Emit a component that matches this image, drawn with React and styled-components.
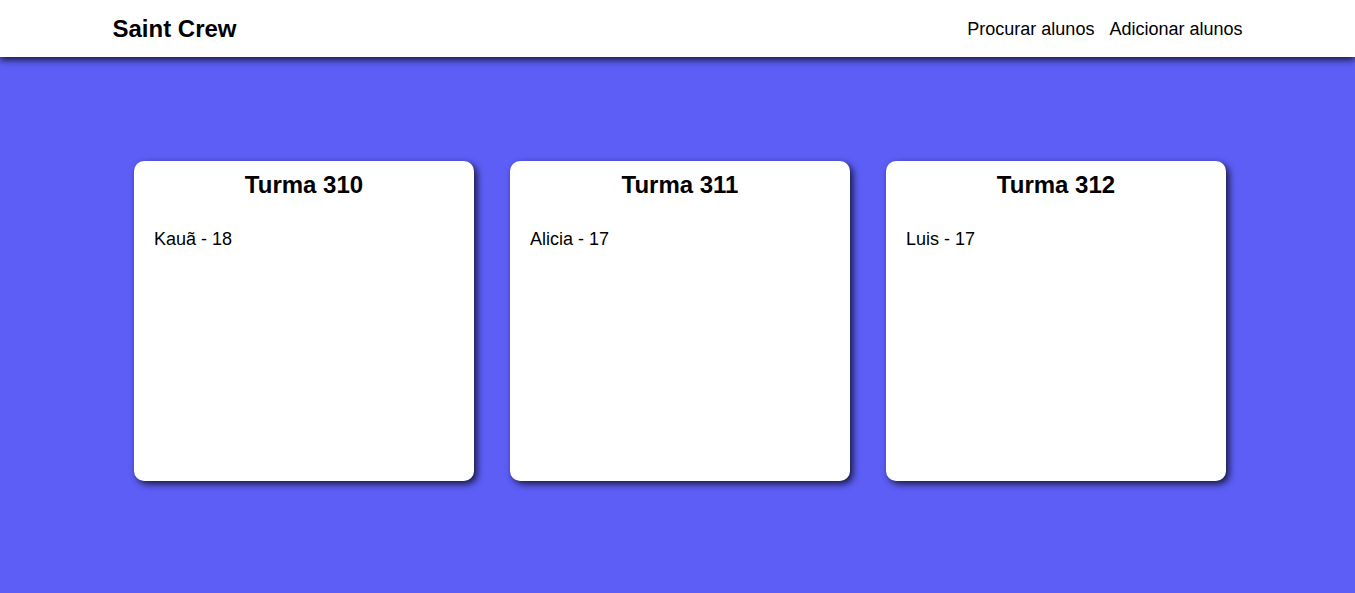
import React from "react";
import styled, { createGlobalStyle } from "styled-components";

const GlobalStyle = createGlobalStyle`
  * { box-sizing: border-box; }
  html, body {
    margin: 0;
    padding: 0;
    background-color: #5c5ef6;
    font-family: "Liberation Sans", Arial, sans-serif;
    color: #000000;
  }
`;

const turmas = [
  { nome: "Turma 310", alunos: [{ nome: "Kauã", idade: 18 }] },
  { nome: "Turma 311", alunos: [{ nome: "Alicia", idade: 17 }] },
  { nome: "Turma 312", alunos: [{ nome: "Luis", idade: 17 }] },
];

export default function App() {
  return (
    <>
      <GlobalStyle />
      <Page>
        <Header>
          <HeaderInner>
            <Logo>Saint Crew</Logo>
            <Nav>
              <NavLink>Procurar alunos</NavLink>
              <NavLink>Adicionar alunos</NavLink>
            </Nav>
          </HeaderInner>
        </Header>
        <Main>
          {turmas.map((t) => (
            <Card key={t.nome}>
              <CardTitle>{t.nome}</CardTitle>
              <StudentList>
                {t.alunos.map((a) => (
                  <Student key={a.nome}>
                    {a.nome} - {a.idade}
                  </Student>
                ))}
              </StudentList>
            </Card>
          ))}
        </Main>
      </Page>
    </>
  );
}

const Page = styled.div`
  min-height: 593px;
  background-color: #5c5ef6;
`;

const Header = styled.header`
  height: 57px;
  background-color: #ffffff;
  box-shadow: 0px 3px 7px rgba(0, 0, 0, 0.75);
  position: relative;
  z-index: 1;
`;

const HeaderInner = styled.div`
  width: 1130px;
  height: 100%;
  margin: 0 auto;
  display: flex;
  flex-direction: row;
  justify-content: space-between;
  align-items: center;
`;

const Logo = styled.div`
  font-size: 24px;
  font-weight: 700;
  line-height: 1;
`;

const Nav = styled.nav`
  display: flex;
  flex-direction: row;
  gap: 15px;
`;

const NavLink = styled.a`
  font-size: 18px;
  color: #000000;
  cursor: pointer;
  line-height: 1;
`;

const Main = styled.main`
  display: flex;
  flex-direction: row;
  justify-content: center;
  gap: 36px;
  padding: 104px 0 0 5px;
`;

const Card = styled.section`
  width: 340px;
  height: 320px;
  background-color: #ffffff;
  border-radius: 10px;
  box-shadow: 3px 3px 7px rgba(0, 0, 0, 0.75);
  padding: 10px 20px;
`;

const CardTitle = styled.h2`
  margin: 0;
  font-size: 24px;
  font-weight: 700;
  text-align: center;
  line-height: 28px;
`;

const StudentList = styled.ul`
  list-style: none;
  margin: 30px 0 0 0;
  padding: 0;
`;

const Student = styled.li`
  font-size: 18px;
  line-height: 21px;
`;
